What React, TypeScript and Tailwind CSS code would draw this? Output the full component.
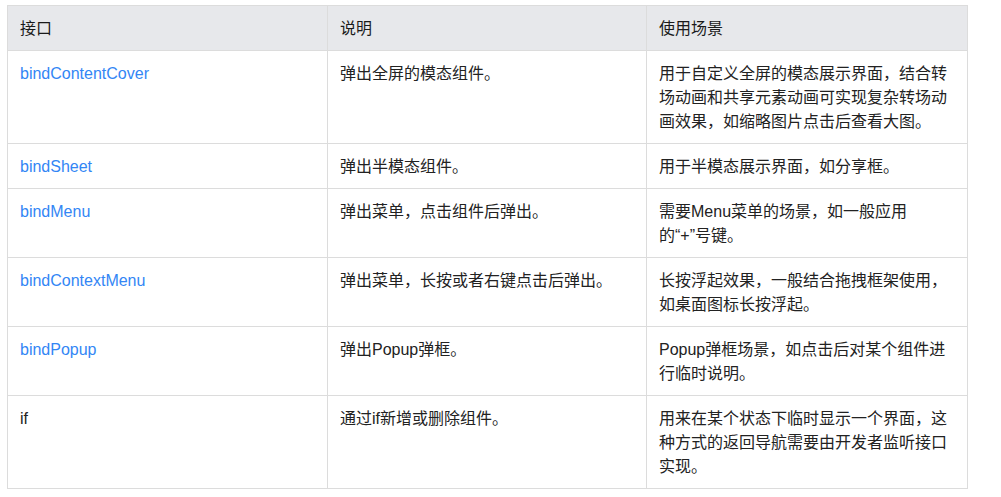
import React from "react";

const rows: { api: string; link: boolean; desc: string; scene: string }[] = [
  {
    api: "bindContentCover",
    link: true,
    desc: "弹出全屏的模态组件。",
    scene: "用于自定义全屏的模态展示界面，结合转场动画和共享元素动画可实现复杂转场动画效果，如缩略图片点击后查看大图。",
  },
  { api: "bindSheet", link: true, desc: "弹出半模态组件。", scene: "用于半模态展示界面，如分享框。" },
  { api: "bindMenu", link: true, desc: "弹出菜单，点击组件后弹出。", scene: "需要Menu菜单的场景，如一般应用的“+”号键。" },
  {
    api: "bindContextMenu",
    link: true,
    desc: "弹出菜单，长按或者右键点击后弹出。",
    scene: "长按浮起效果，一般结合拖拽框架使用，如桌面图标长按浮起。",
  },
  { api: "bindPopup", link: true, desc: "弹出Popup弹框。", scene: "Popup弹框场景，如点击后对某个组件进行临时说明。" },
  {
    api: "if",
    link: false,
    desc: "通过if新增或删除组件。",
    scene: "用来在某个状态下临时显示一个界面，这种方式的返回导航需要由开发者监听接口实现。",
  },
];

export default function App() {
  return (
    <div
      className="bg-white w-[1001px] h-[497px] pt-[5px] pl-[7px]"
      style={{ fontFamily: '"Liberation Sans", "Noto Sans CJK SC", sans-serif' }}
    >
      <table className="w-[960px] table-fixed border-collapse text-[16px] leading-[24px] text-[#222]">
        <colgroup>
          <col className="w-[320px]" />
          <col className="w-[319px]" />
          <col className="w-[321px]" />
        </colgroup>
        <thead>
          <tr className="bg-[#e7e8eb]">
            <th className="border border-[#dcdcdc] px-[12px] pt-[11px] pb-[9px] text-left font-normal text-[#1a1a1a]">接口</th>
            <th className="border border-[#dcdcdc] px-[12px] pt-[11px] pb-[9px] text-left font-normal text-[#1a1a1a]">说明</th>
            <th className="border border-[#dcdcdc] px-[12px] pt-[11px] pb-[9px] text-left font-normal text-[#1a1a1a]">使用场景</th>
          </tr>
        </thead>
        <tbody>
          {rows.map((r) => (
            <tr key={r.api}>
              <td className="border border-[#dcdcdc] px-[12px] pt-[11px] pb-[9px] align-top">
                <span className={r.link ? "text-[#3386f5]" : "text-[#222]"}>{r.api}</span>
              </td>
              <td className="border border-[#dcdcdc] px-[12px] pt-[11px] pb-[9px] align-top">{r.desc}</td>
              <td className="border border-[#dcdcdc] px-[12px] pt-[11px] pb-[9px] align-top">{r.scene}</td>
            </tr>
          ))}
        </tbody>
      </table>
    </div>
  );
}
